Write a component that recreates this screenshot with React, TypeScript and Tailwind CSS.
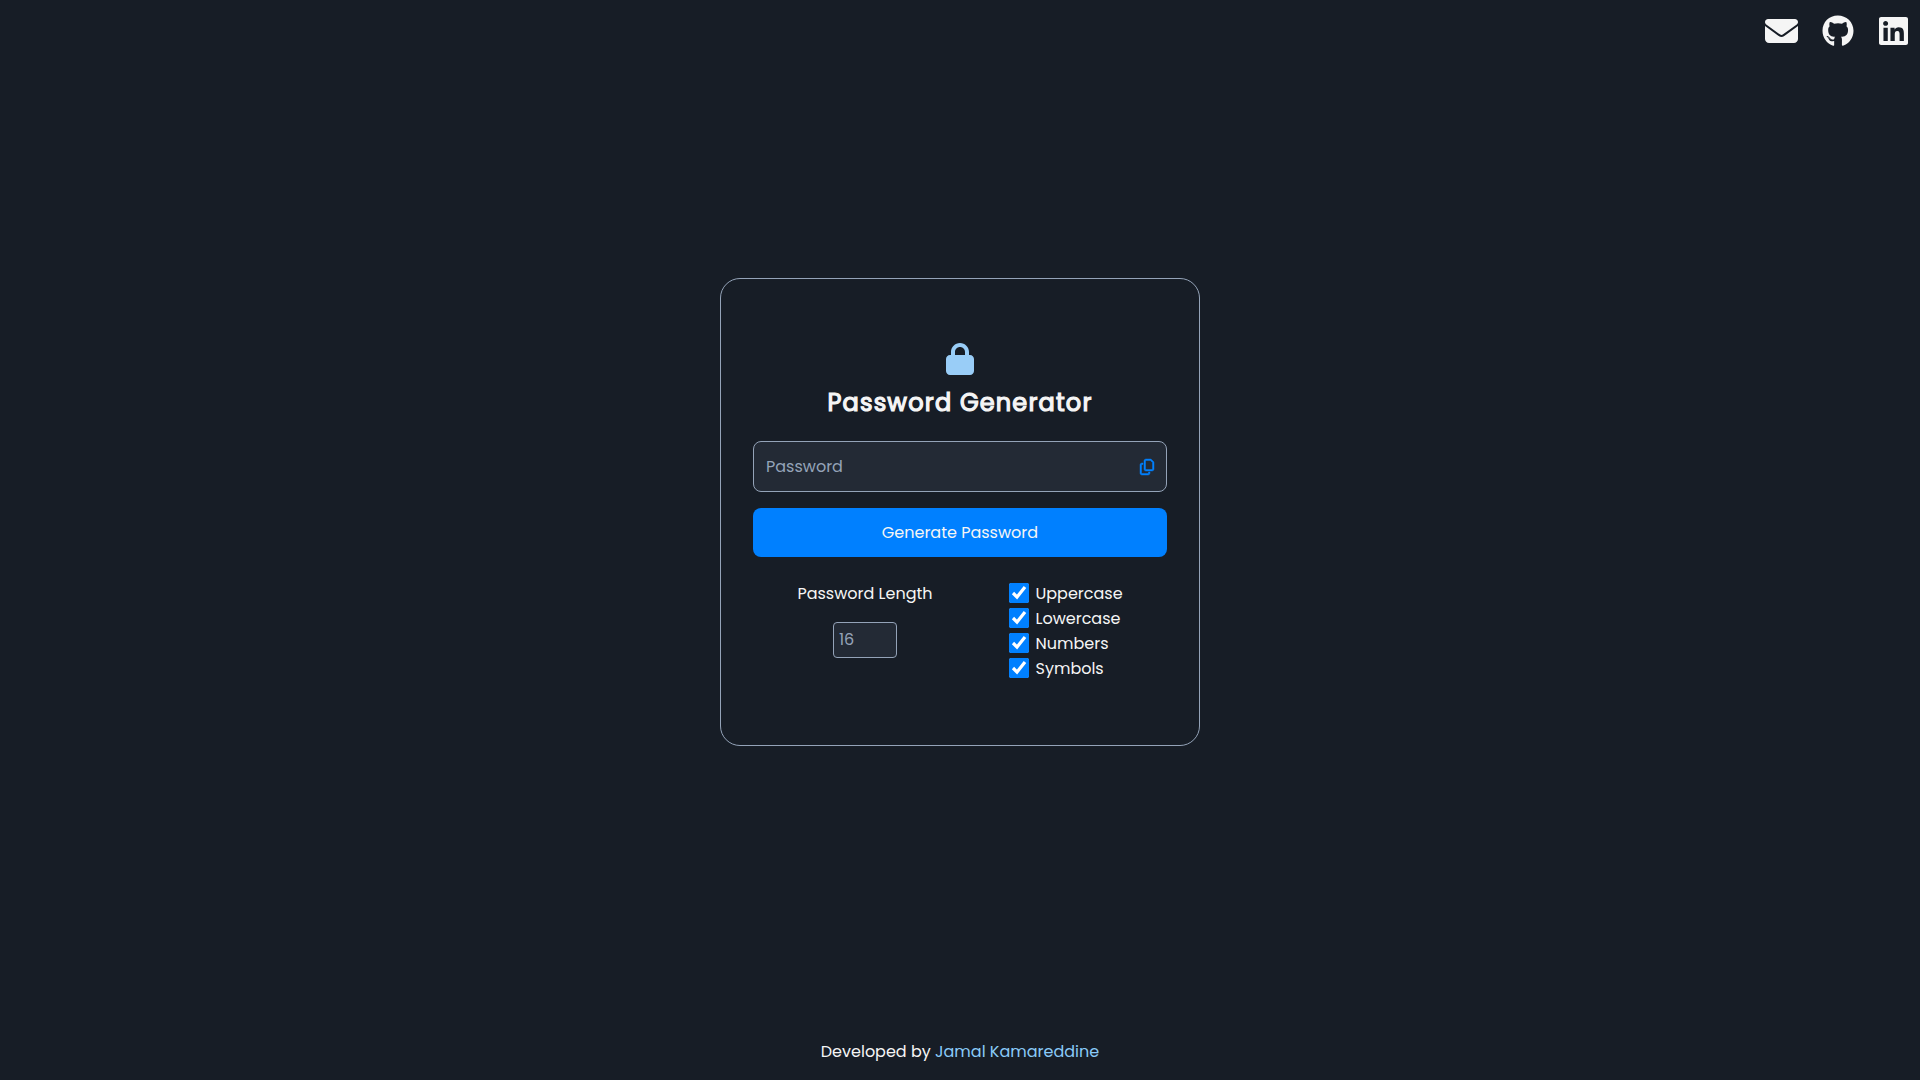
import { FaEnvelope, FaGithub, FaLinkedin, FaLock, FaRegCopy } from "react-icons/fa6";

const options = ["Uppercase", "Lowercase", "Numbers", "Symbols"];

export default function App() {
  return (
    <div className="flex h-screen flex-col overflow-hidden bg-[#171d26] font-['Poppins','Inter',sans-serif] text-base text-[#f5f5f5]">
      <header className="flex h-[62px] shrink-0 items-center justify-end pr-3 text-[32px]">
        <a href="#" aria-label="Email"><FaEnvelope className="h-8 w-[33px]" preserveAspectRatio="none" /></a>
        <a href="#" aria-label="GitHub" className="ml-6"><FaGithub className="h-8 w-8" /></a>
        <a href="#" aria-label="LinkedIn" className="ml-[25px]"><FaLinkedin className="h-8 w-[29px]" preserveAspectRatio="none" /></a>
      </header>

      <main className="mx-auto mt-[216px] h-[468px] w-[480px] shrink-0 rounded-[20px] border border-[#94a3b8] px-8 pt-16">
        <FaLock className="mx-auto h-8 w-7 text-[#99cdf7]" />
        <h1 className="mt-[10px] text-center text-2xl leading-9 font-normal tracking-[1.18px] whitespace-nowrap [-webkit-text-stroke:1.2px_#f5f5f5]">
          Password Generator
        </h1>
        <div className="mt-5 flex h-[51px] items-center justify-between rounded-lg border border-[#94a3b8] bg-[#232a35] px-3">
          <input
            type="text"
            placeholder="Password"
            className="w-80 bg-transparent outline-none placeholder:text-[#94a3b8]"
          />
          <button aria-label="Copy">
            <FaRegCopy className="h-4 w-3.5 overflow-visible stroke-[#0080ff] stroke-[14] text-[#0080ff]" />
          </button>
        </div>
        <button className="mt-4 block h-[49px] w-full rounded-lg bg-[#0080ff]">
          Generate Password
        </button>
        <div className="mt-6 flex">
          <div className="ml-[35px] flex w-[154px] flex-col items-center">
            <label className="mt-px h-6 leading-6 whitespace-nowrap">Password Length</label>
            <input
              type="text"
              placeholder="16"
              className="mt-4 h-9 w-16 rounded border border-[#94a3b8] bg-[#232a35] px-[5px] pb-0.5 outline-none placeholder:text-[#94a3b8]"
            />
          </div>
          <ul className="ml-[67px] mt-0.5 flex flex-col gap-[5px]">
            {options.map((label) => (
              <li key={label}>
                <label className="flex h-5 items-center">
                  <input type="checkbox" defaultChecked className="size-5 accent-[#0080ff]" />
                  <span className="ml-[6.5px] pt-0.5">{label}</span>
                </label>
              </li>
            ))}
          </ul>
        </div>
      </main>

      <footer className="mt-auto mb-4 h-6 text-center leading-6">
        Developed by <a href="#" className="text-[#8acbf9]">Jamal Kamareddine</a>
      </footer>
    </div>
  );
}
